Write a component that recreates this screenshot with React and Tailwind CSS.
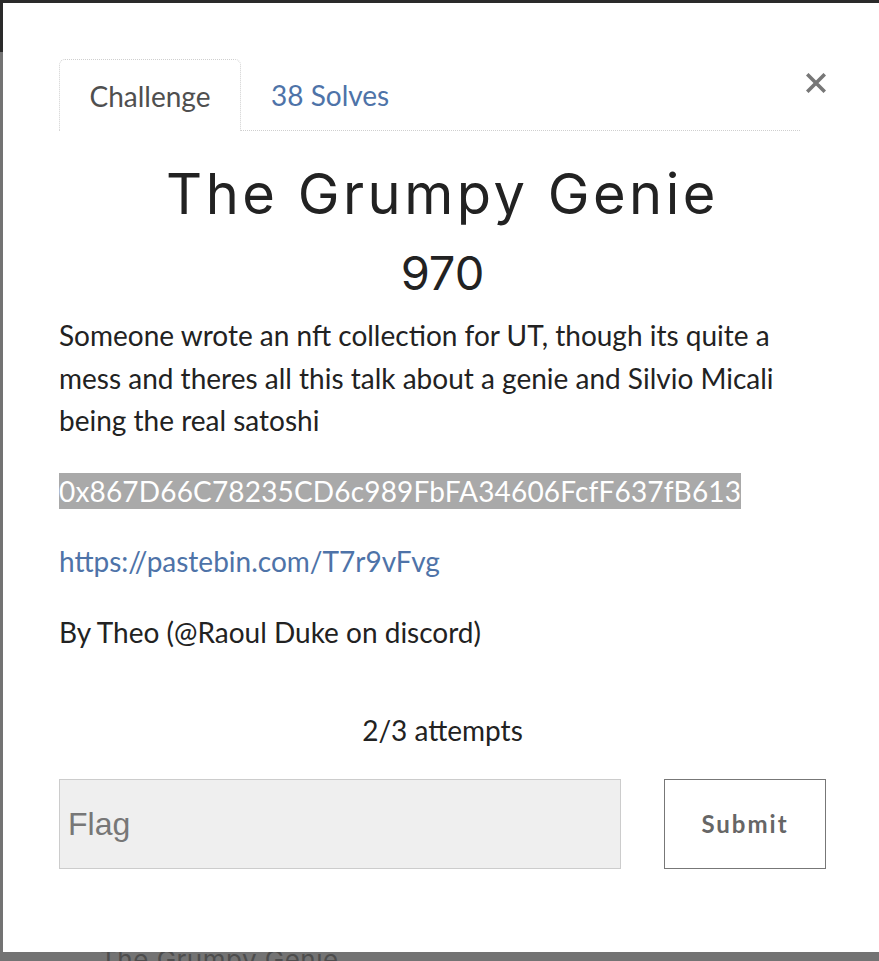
import { useState } from "react";

const App = () => {
  const [flag, setFlag] = useState("");

  return (
    <div className="relative w-[879px] h-[961px] overflow-hidden bg-[#737373] font-['Lato','Liberation_Sans',sans-serif]">
      {/* Backdrop */}
      <div className="h-[52px] bg-[#2a2a2a]" />
      <div className="absolute left-[100px] top-[944px] text-[26px] leading-[32px] text-[#4d4d4d] font-['Inter',sans-serif] tracking-[0.5px]">
        The Grumpy Genie
      </div>

      {/* Modal */}
      <div className="absolute left-[3px] top-[3px] w-[876px] h-[949px] bg-white pl-[56px] pr-[53px] pt-[56px]">
        {/* Tabs */}
        <div className="flex items-start">
          <div className="flex flex-1 h-[72px] border-b border-dotted border-[#cfcfcf]">
            <div className="h-[72px] w-[182px] -mb-px flex items-center justify-center rounded-t-[6px] border border-b-0 border-dotted border-[#cfcfcf] bg-white text-[28px] text-[#4f4f4f]">
              Challenge
            </div>
            <div className="h-[71px] px-[30px] flex items-center text-[28px] text-[#4e73a8]">
              38 Solves
            </div>
          </div>
          <button className="w-[26px] mt-[14px] flex justify-end">
            <svg width="20" height="20" viewBox="0 0 20 20">
              <path
                d="M2.5 2.5 L17.5 17.5 M17.5 2.5 L2.5 17.5"
                stroke="#777"
                strokeWidth="3.6"
                strokeLinecap="square"
              />
            </svg>
          </button>
        </div>

        {/* Title */}
        <h2 className="mt-[31px] text-center text-[56px] leading-[64px] font-['Inter',sans-serif] font-normal tracking-[3.5px] text-[#222]">
          The Grumpy Genie
        </h2>
        <h3 className="mt-[19px] text-center text-[47px] leading-[56px] font-['Inter',sans-serif] font-normal text-[#222]">
          970
        </h3>

        {/* Description */}
        <div className="mt-[13px] text-[28px] leading-[42.5px] text-[#222]">
          <p>
            Someone wrote an nft collection for UT, though its quite a mess
            and theres all this talk about a genie and Silvio Micali being the
            real satoshi
          </p>
          <p className="mt-[28px]">
            <span className="bg-[#a9a9a9] text-white py-[1px] tracking-[0.17px]">
              0x867D66C78235CD6c989FbFA34606FcfF637fB613
            </span>
          </p>
          <p className="mt-[28px]">
            <a className="text-[#4e73a8]">https://pastebin.com/T7r9vFvg</a>
          </p>
          <p className="mt-[28px]">By Theo (@Raoul Duke on discord)</p>
        </div>

        {/* Attempts */}
        <p className="mt-[56px] text-center text-[28px] leading-[42px] text-[#222]">
          2/3 attempts
        </p>

        {/* Flag form */}
        <div className="mt-[28px] flex gap-[43px]">
          <input
            value={flag}
            onChange={(e) => setFlag(e.target.value)}
            placeholder="Flag"
            className="flex-1 h-[90px] bg-[#efefef] border border-[#cccccc] px-[8px] text-[32px] font-['Liberation_Sans',sans-serif] placeholder:text-[#777] outline-none"
          />
          <button className="w-[162px] h-[90px] border border-[#777] bg-white text-[24px] font-bold tracking-[2px] text-[#666]">
            Submit
          </button>
        </div>
      </div>
    </div>
  );
};

export default App;
